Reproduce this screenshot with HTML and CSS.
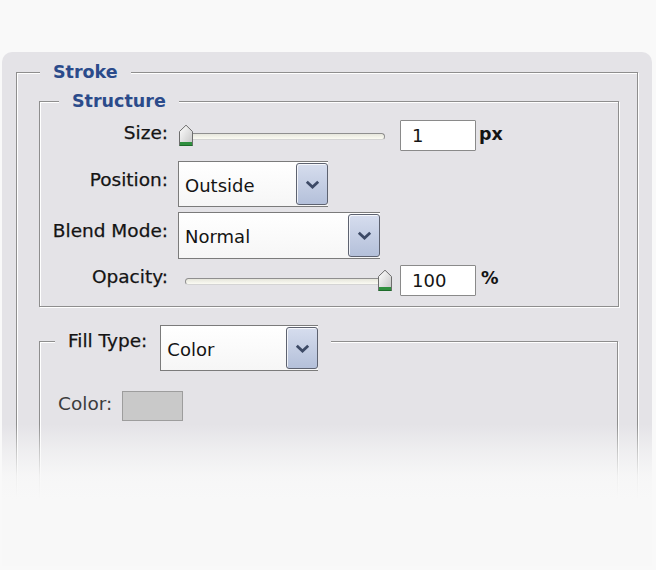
FILE: index.html
```html
<!DOCTYPE html>
<html lang="en">
<head>
<meta charset="utf-8">
<title>Stroke</title>
<link rel="stylesheet" href="styles.css">
</head>
<body>
<div class="panel">
  <fieldset class="group group-outer">
    <legend class="title title-outer">Stroke</legend>

    <fieldset class="group group-structure">
      <legend class="title title-structure">Structure</legend>

      <div class="row row-size">
        <span class="label">Size:</span>
        <div class="ctrl">
          <div class="slider">
            <div class="track"></div>
            <svg class="thumb" style="--v:0" width="16" height="23" viewBox="0 0 16 23">
              <defs>
                <linearGradient id="tg1" x1="0" y1="0" x2="1" y2="1">
                  <stop offset="0" stop-color="#ffffff"/>
                  <stop offset="1" stop-color="#c4c4c4"/>
                </linearGradient>
              </defs>
              <path d="M1.5 7.5 L8 1.2 L14.5 7.5 V21.5 H1.5 Z" fill="url(#tg1)" stroke="#6d6d6d" stroke-width="1"/>
              <path d="M2 18 H14 V21 H2 Z" fill="#2f8f3e"/>
              <path d="M1.5 21.5 H14.5" stroke="#1d6b2a" stroke-width="1"/>
            </svg>
          </div>
          <input class="field" type="text" value="1" readonly>
          <span class="unit unit-px">px</span>
        </div>
      </div>

      <div class="row row-position">
        <span class="label">Position:</span>
        <div class="combo combo-position">
          <span class="combo-value">Outside</span>
          <span class="combo-btn">
            <svg width="15" height="9" viewBox="0 0 15 9"><path d="M1.8 1.8 L7.5 7 L13.2 1.8" fill="none" stroke="#3d4a66" stroke-width="2.8"/></svg>
          </span>
        </div>
      </div>

      <div class="row row-blend">
        <span class="label">Blend Mode:</span>
        <div class="combo combo-blend">
          <span class="combo-value">Normal</span>
          <span class="combo-btn">
            <svg width="15" height="9" viewBox="0 0 15 9"><path d="M1.8 1.8 L7.5 7 L13.2 1.8" fill="none" stroke="#3d4a66" stroke-width="2.8"/></svg>
          </span>
        </div>
      </div>

      <div class="row row-opacity">
        <span class="label">Opacity:</span>
        <div class="ctrl">
          <div class="slider">
            <div class="track"></div>
            <svg class="thumb" style="--v:1" width="16" height="23" viewBox="0 0 16 23">
              <defs>
                <linearGradient id="tg2" x1="0" y1="0" x2="1" y2="1">
                  <stop offset="0" stop-color="#ffffff"/>
                  <stop offset="1" stop-color="#c4c4c4"/>
                </linearGradient>
              </defs>
              <path d="M1.5 7.5 L8 1.2 L14.5 7.5 V21.5 H1.5 Z" fill="url(#tg2)" stroke="#6d6d6d" stroke-width="1"/>
              <path d="M2 18 H14 V21 H2 Z" fill="#2f8f3e"/>
              <path d="M1.5 21.5 H14.5" stroke="#1d6b2a" stroke-width="1"/>
            </svg>
          </div>
          <input class="field" type="text" value="100" readonly>
          <span class="unit unit-pct">%</span>
        </div>
      </div>
    </fieldset>

    <fieldset class="group group-fill">
      <legend class="fill-legend">
        <span class="label fill-label">Fill Type:</span>
        <div class="combo combo-fill">
          <span class="combo-value">Color</span>
          <span class="combo-btn">
            <svg width="15" height="9" viewBox="0 0 15 9"><path d="M1.8 1.8 L7.5 7 L13.2 1.8" fill="none" stroke="#3d4a66" stroke-width="2.8"/></svg>
          </span>
        </div>
      </legend>
      <div class="fill-body">
        <span class="label label-muted">Color:</span>
        <div class="swatch"></div>
      </div>
    </fieldset>
  </fieldset>
</div>
</body>
</html>
```

FILE: styles.css
```css
html, body {
  margin: 0;
  padding: 0;
}

body {
  background: #f9f9f9;
  font-family: "DejaVu Sans", "Liberation Sans", sans-serif;
  color: #141414;
}

.panel {
  position: relative;
  margin: 52px 4px 0 2px;
  padding: 10px 14px 18px 14px;
  background: #e4e3e7;
  border-radius: 10px 10px 0 0;
}

.panel::after {
  content: "";
  position: absolute;
  left: 0;
  right: 0;
  top: 372px;
  bottom: 0;
  background: linear-gradient(to bottom,
    rgba(248, 248, 248, 0) 0,
    rgba(248, 248, 248, 0.5) 25px,
    rgba(248, 248, 248, 0.92) 52px,
    rgba(248, 248, 248, 1) 75px);
  pointer-events: none;
}

.group {
  margin: 0;
  padding: 0;
  min-inline-size: 0;
  border: 1px solid #8e8e8e;
  box-shadow: inset 1px 1px 0 #ffffff, 1px 1px 0 #ffffff;
}

.group-outer {
  padding-bottom: 15px;
}

.group-structure {
  margin: 9px 18px 0 22px;
  padding-bottom: 10px;
}

.group-fill {
  margin: 18px 19px 0 22px;
}

.title {
  padding: 0 13px;
  background: #e4e3e7;
  font-weight: bold;
  font-size: 17.5px;
  line-height: 20px;
  color: #2b4b8b;
}

.title-outer {
  margin-left: 23px;
}

.title-structure {
  margin-left: 19px;
}

.row {
  display: grid;
  grid-template-columns: 128px auto;
  column-gap: 10px;
  align-items: center;
}

.row-size {
  height: 31px;
  margin-top: 9px;
}

.row-position {
  height: 46px;
  margin-top: 10px;
}

.row-blend {
  height: 47px;
  margin-top: 5px;
}

.row-opacity {
  height: 31px;
  margin-top: 6px;
}

.label {
  font-size: 18.5px;
  line-height: 20px;
  white-space: nowrap;
  -webkit-text-stroke: 0.25px #141414;
}

.row .label {
  text-align: right;
  margin-bottom: 9px;
}

.row-size .label {
  margin-bottom: 5px;
}

.row-opacity .label {
  margin-bottom: 8px;
}

.ctrl {
  display: flex;
  align-items: center;
  height: 100%;
}

.slider {
  position: relative;
  width: 215px;
  height: 23px;
  flex: none;
}

.track {
  margin: 9px 8px 0 7px;
  height: 5px;
  border: 1px solid #8f8f8f;
  border-bottom-color: #d4d4d4;
  border-radius: 4px;
  background: linear-gradient(to bottom, #e6e6dc, #fbfbf3);
}

.thumb {
  position: absolute;
  top: 0;
  left: calc((100% - 16px) * var(--v));
  display: block;
}

.field {
  margin: 0 0 0 7px;
  width: 76px;
  height: 31px;
  box-sizing: border-box;
  border: 1px solid #8a8a8a;
  border-radius: 1px;
  background: #ffffff;
  padding: 0 0 0 11px;
  font-family: "DejaVu Sans", "Liberation Sans", sans-serif;
  font-size: 18px;
  color: #141414;
  outline: none;
}

.unit {
  font-weight: bold;
  font-size: 17.5px;
  line-height: 20px;
}

.unit-px {
  margin-left: 3px;
  margin-bottom: 4px;
}

.unit-pct {
  margin-left: 5px;
  margin-bottom: 6px;
}

.combo {
  display: flex;
  box-sizing: border-box;
  border: 1px solid #7b7b7b;
  border-right: 0;
  background: linear-gradient(to bottom, #ffffff, #f6f6f6);
  justify-self: start;
}

.combo-position {
  width: 150px;
  height: 46px;
}

.combo-blend {
  width: 202px;
  height: 47px;
}

.combo-fill {
  width: 158px;
  height: 46px;
}

.combo-value {
  flex: 1;
  display: flex;
  align-items: center;
  padding: 3px 0 0 6px;
  font-size: 18px;
  line-height: 20px;
}

.combo-btn {
  width: 32px;
  box-sizing: border-box;
  margin: 1px 0;
  border: 1px solid #5d6270;
  border-radius: 3px;
  background: linear-gradient(to bottom, #d6ddee, #b4c0da);
  box-shadow: inset 1px 1px 0 rgba(255, 255, 255, 0.75);
  display: flex;
  align-items: center;
  justify-content: center;
}

.fill-legend {
  margin-left: 15px;
  padding: 0 13px 0 13px;
  background: #e4e3e7;
  height: 32px;
  display: flex;
  align-items: flex-start;
}

.fill-label {
  margin-top: 6px;
  margin-right: 13px;
}

.fill-body {
  display: flex;
  align-items: center;
  padding: 34px 0 110px 18px;
}

.label-muted {
  color: #3c3c3c;
  -webkit-text-stroke: 0;
  margin-bottom: 4px;
}

.swatch {
  margin-left: 10px;
  width: 61px;
  height: 30px;
  box-sizing: border-box;
  background: #c9c9c9;
  border: 1px solid #9d9d9d;
}
```
